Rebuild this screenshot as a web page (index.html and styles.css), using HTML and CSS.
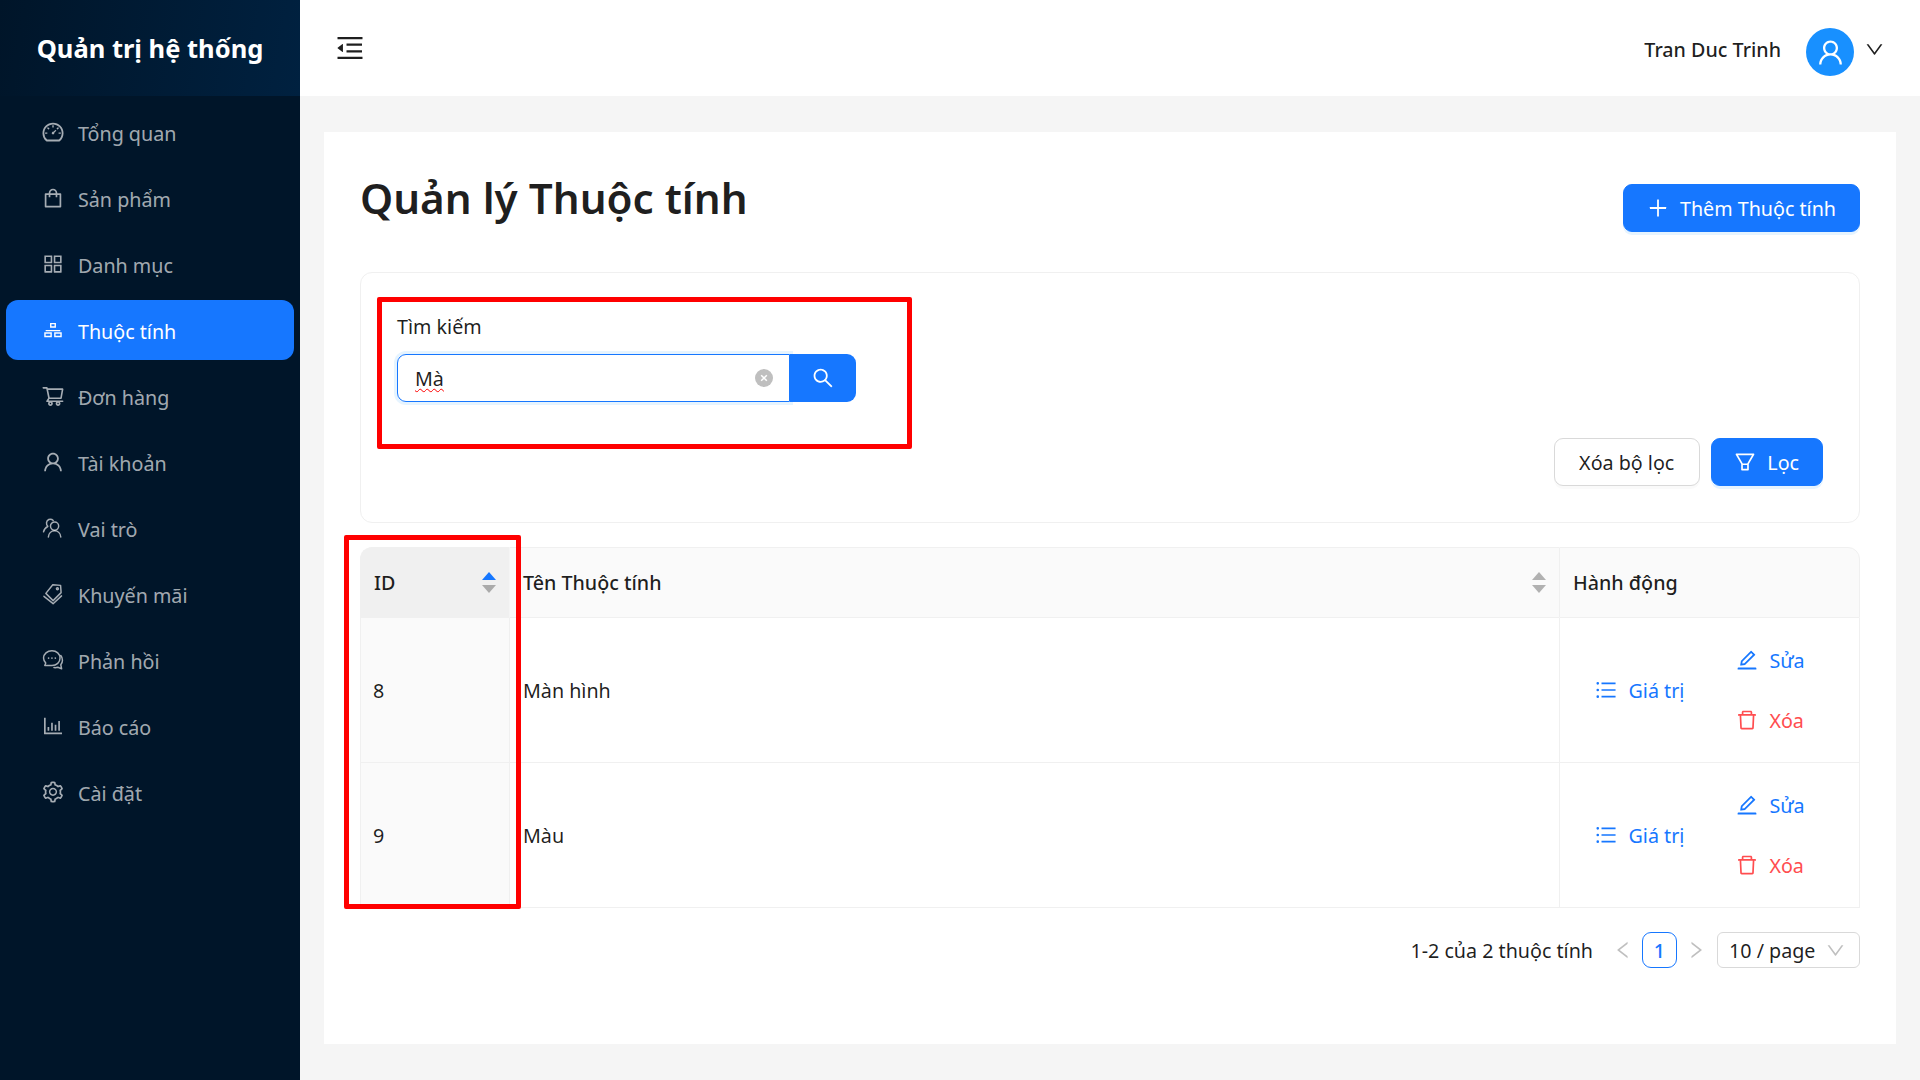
FILE: index.html
```html
<!DOCTYPE html>
<html lang="vi">

<head>
  <meta charset="UTF-8" />
  <title>Quản lý Thuộc tính</title>
  <link rel="stylesheet" href="styles.css">
</head>

<body>
  <svg class="sprite" xmlns="http://www.w3.org/2000/svg">
    <symbol id="i-dashboard" viewBox="0 0 1024 1024"><path d="M924.8 385.6a446.7 446.7 0 00-96-142.4 446.7 446.7 0 00-142.4-96C631.1 123.8 572.5 112 512 112s-119.1 11.8-174.4 35.2a446.7 446.7 0 00-142.4 96 446.7 446.7 0 00-96 142.4C75.8 440.9 64 499.5 64 560c0 132.7 58.3 257.7 159.9 343.1l1.7 1.4c5.8 4.8 13.1 7.5 20.6 7.5h531.7c7.5 0 14.8-2.7 20.6-7.5l1.7-1.4C901.7 817.7 960 692.7 960 560c0-60.5-11.9-119.1-35.2-174.4zM761.4 836H262.6A371.12 371.12 0 01140 560c0-99.4 38.7-192.8 109-263 70.3-70.3 163.7-109 263-109 99.4 0 192.8 38.7 263 109 70.3 70.3 109 163.7 109 263 0 105.6-44.5 205.5-122.6 276zM623.5 421.5a8.03 8.03 0 00-11.3 0L527.7 506c-18.7-5-39.4-.2-54.1 14.5a55.95 55.95 0 000 79.2 55.95 55.95 0 0079.2 0 55.87 55.87 0 0014.5-54.1l84.5-84.5c3.1-3.1 3.1-8.2 0-11.3l-28.3-28.3zM490 320h44c4.4 0 8-3.6 8-8v-80c0-4.4-3.6-8-8-8h-44c-4.4 0-8 3.6-8 8v80c0 4.4 3.6 8 8 8zm260 218v44c0 4.4 3.6 8 8 8h80c4.4 0 8-3.6 8-8v-44c0-4.4-3.6-8-8-8h-80c-4.4 0-8 3.6-8 8zm12.7-197.2l-31.1-31.1a8.03 8.03 0 00-11.3 0l-56.6 56.6a8.03 8.03 0 000 11.3l31.1 31.1c3.1 3.1 8.2 3.1 11.3 0l56.6-56.6c3.1-3.1 3.1-8.2 0-11.3zm-458.6-31.1a8.03 8.03 0 00-11.3 0l-31.1 31.1a8.03 8.03 0 000 11.3l56.6 56.6c3.1 3.1 8.2 3.1 11.3 0l31.1-31.1c3.1-3.1 3.1-8.2 0-11.3l-56.6-56.6zM262 530h-80c-4.4 0-8 3.6-8 8v44c0 4.4 3.6 8 8 8h80c4.4 0 8-3.6 8-8v-44c0-4.4-3.6-8-8-8z"/></symbol>
    <symbol id="i-shopping" viewBox="0 0 1024 1024"><path d="M832 312H696v-16c0-101.6-82.4-184-184-184s-184 82.4-184 184v16H192c-17.7 0-32 14.3-32 32v536c0 17.7 14.3 32 32 32h640c17.7 0 32-14.3 32-32V344c0-17.7-14.3-32-32-32zm-432-16c0-61.9 50.1-112 112-112s112 50.1 112 112v16H400v-16zm392 544H232V384h96v88c0 4.4 3.6 8 8 8h56c4.4 0 8-3.6 8-8v-88h224v88c0 4.4 3.6 8 8 8h56c4.4 0 8-3.6 8-8v-88h96v456z"/></symbol>
    <symbol id="i-appstore" viewBox="0 0 1024 1024"><path d="M464 144H160c-8.8 0-16 7.2-16 16v304c0 8.8 7.2 16 16 16h304c8.8 0 16-7.2 16-16V160c0-8.8-7.2-16-16-16zm-52 268H212V212h200v200zm452-268H560c-8.8 0-16 7.2-16 16v304c0 8.8 7.2 16 16 16h304c8.8 0 16-7.2 16-16V160c0-8.8-7.2-16-16-16zm-52 268H612V212h200v200zM464 544H160c-8.8 0-16 7.2-16 16v304c0 8.8 7.2 16 16 16h304c8.8 0 16-7.2 16-16V560c0-8.8-7.2-16-16-16zm-52 268H212V612h200v200zm452-268H560c-8.8 0-16 7.2-16 16v304c0 8.8 7.2 16 16 16h304c8.8 0 16-7.2 16-16V560c0-8.8-7.2-16-16-16zm-52 268H612V612h200v200z"/></symbol>
    <symbol id="i-cluster" viewBox="-64 -64 1152 1152"><path fill-rule="evenodd" d="M370 170h284v230H370zM438 238v94h148v-94zM92 624h364v230H92zM160 692v94h228v-94zM568 624h364v230H568zM636 692v94h228v-94zM160 512h704v64H160z"/></symbol>
    <symbol id="i-cart" viewBox="0 0 1024 1024"><path d="M922.9 701.9H327.4l29.9-60.9 496.8-.9c16.8 0 31.2-12 34.2-28.6l68.8-385.1c1.8-10.1-.9-20.5-7.5-28.4a34.99 34.99 0 00-26.6-12.5l-632-2.1-5.4-25.4c-3.4-16.2-18-28-34.6-28H96.5a35.3 35.3 0 100 70.6h125.9L246 312.8l58.1 281.3-74.8 122.1a34.96 34.96 0 00-3 36.8c6 11.9 18.1 19.4 31.5 19.4h62.8a102.43 102.43 0 00-20.6 61.7c0 56.6 46 102.6 102.6 102.6s102.6-46 102.6-102.6c0-22.3-7.4-44-20.6-61.7h161.1a102.43 102.43 0 00-20.6 61.7c0 56.6 46 102.6 102.6 102.6s102.6-46 102.6-102.6c0-22.3-7.4-44-20.6-61.7H923c19.4 0 35.3-15.8 35.3-35.3a35.42 35.42 0 00-35.4-35.2zM305.7 253l575.8 1.9-56.4 315.8-452.3.8L305.7 253zm96.9 612.7c-17.4 0-31.6-14.2-31.6-31.6 0-17.4 14.2-31.6 31.6-31.6s31.6 14.2 31.6 31.6a31.6 31.6 0 01-31.6 31.6zm325.1 0c-17.4 0-31.6-14.2-31.6-31.6 0-17.4 14.2-31.6 31.6-31.6s31.6 14.2 31.6 31.6a31.6 31.6 0 01-31.6 31.6z"/></symbol>
    <symbol id="i-user" viewBox="0 0 1024 1024"><path d="M858.5 763.6a374 374 0 00-80.6-119.5 375.63 375.63 0 00-119.5-80.6c-.4-.2-.8-.3-1.2-.5C719.5 518 760 444.7 760 362c0-137-111-248-248-248S264 225 264 362c0 82.7 40.5 156 102.8 201.1-.4.2-.8.3-1.2.5-44.8 18.9-85 46-119.5 80.6a375.63 375.63 0 00-80.6 119.5A371.7 371.7 0 00136 901.8a8 8 0 008 8.2h60c4.4 0 7.9-3.5 8-7.8 2-77.2 33-149.5 87.8-204.3 56.7-56.7 132-87.9 212.2-87.9s155.5 31.2 212.2 87.9C779 752.7 810 825 812 902.2c.1 4.4 3.6 7.8 8 7.8h60a8 8 0 008-8.2c-1-47.8-10.9-94.3-29.5-138.2zM512 534c-45.9 0-89.1-17.9-121.6-50.4S340 407.9 340 362c0-45.9 17.9-89.1 50.4-121.6S466.1 190 512 190s89.1 17.9 121.6 50.4S684 316.1 684 362c0 45.9-17.9 89.1-50.4 121.6S557.9 534 512 534z"/></symbol>
    <symbol id="i-role" viewBox="-1.4 -1.4 22.8 22.8"><g fill="none" stroke="currentColor" stroke-width="1.4" stroke-linecap="round"><circle cx="11.5" cy="8.2" r="3.9"/><path d="M5.6 18.6c.3-3.6 2.8-5.9 5.9-5.9s5.6 2.3 5.9 5.9"/><path d="M10.2 2.8A4 4 0 0 0 6 1.9a3.9 3.9 0 0 0-.9 6.4M5 8.6C3 9.6 1.5 11.3 1 13.6"/></g></symbol>
    <symbol id="i-tags" viewBox="-1.4 -1.4 22.8 22.8"><g fill="none" stroke="currentColor" stroke-width="1.4" stroke-linejoin="round" stroke-linecap="round"><path d="M9.8 1.2l7.4.6.5 6.9-7.6 7.6-6.9-6.9z"/><path d="M1.4 12.2l8.7 7 8-7.4"/><circle cx="14.2" cy="5" r=".9"/></g></symbol>
    <symbol id="i-comment" viewBox="-1.4 -1.4 22.8 22.8"><g fill="none" stroke="currentColor" stroke-width="1.4" stroke-linejoin="round" stroke-linecap="round"><path d="M9 1.2c4.4 0 7.7 3 7.7 7s-3.300 7-7.700 7H2.200l.9-2.400C1.800 11.500 1 9.900 1 8.200c0-4 3.600-7 8-7z"/><path d="M17.400 5.800c1 1.200 1.600 2.800 1.600 4.400 0 1.600-.600 3.100-1.600 4.300l.800 3.900-3.600-1.500c-1.200.4-2.500.5-3.700.300"/></g><g fill="currentColor"><circle cx="5.800" cy="8.200" r=".8"/><circle cx="9" cy="8.200" r=".8"/><circle cx="12.200" cy="8.200" r=".8"/></g></symbol>
    <symbol id="i-chart" viewBox="0 0 1024 1024"><path d="M888 792H200V168c0-4.400-3.600-8-8-8h-56c-4.400 0-8 3.600-8 8v688c0 4.400 3.600 8 8 8h752c4.400 0 8-3.600 8-8v-56c0-4.400-3.600-8-8-8zm-600-80h56c4.400 0 8-3.600 8-8V560c0-4.400-3.600-8-8-8h-56c-4.400 0-8 3.600-8 8v144c0 4.400 3.600 8 8 8zm152 0h56c4.400 0 8-3.600 8-8V384c0-4.400-3.600-8-8-8h-56c-4.400 0-8 3.600-8 8v320c0 4.400 3.600 8 8 8zm152 0h56c4.400 0 8-3.600 8-8V462c0-4.400-3.600-8-8-8h-56c-4.400 0-8 3.600-8 8v242c0 4.400 3.600 8 8 8zm152 0h56c4.400 0 8-3.600 8-8V304c0-4.400-3.600-8-8-8h-56c-4.400 0-8 3.600-8 8v400c0 4.400 3.600 8 8 8z"/></symbol>
    <symbol id="i-setting" viewBox="0 0 1024 1024"><path d="M924.8 625.7l-65.5-56c3.100-19 4.700-38.400 4.700-57.800s-1.600-38.800-4.700-57.800l65.500-56a32.030 32.030 0 009.300-35.200l-.9-2.600a443.740 443.740 0 00-79.700-137.900l-1.800-2.100a32.120 32.120 0 00-35.100-9.500l-81.300 28.900c-30-24.600-63.500-44-99.700-57.600l-15.700-85a32.050 32.050 0 00-25.800-25.700l-2.700-.5c-52.100-9.400-106.900-9.400-159 0l-2.700.5a32.050 32.050 0 00-25.800 25.700l-15.800 85.400a351.860 351.860 0 00-99 57.400l-81.900-29.100a32 32 0 00-35.100 9.500l-1.800 2.100a446.020 446.020 0 00-79.700 137.900l-.9 2.600c-4.500 12.500-.8 26.500 9.300 35.200l66.300 56.600c-3.100 18.800-4.600 38-4.600 57.100 0 19.200 1.500 38.400 4.600 57.100L99 625.500a32.030 32.030 0 00-9.300 35.200l.9 2.600c18.100 50.400 44.900 96.900 79.700 137.900l1.800 2.100a32.120 32.120 0 0035.100 9.500l81.900-29.100c29.800 24.500 63.100 43.900 99 57.400l15.800 85.400a32.050 32.050 0 0025.800 25.700l2.700.5a449.400 449.400 0 00159 0l2.700-.5a32.050 32.050 0 0025.800-25.700l15.700-85a350 350 0 0099.700-57.600l81.300 28.900a32 32 0 0035.100-9.500l1.800-2.100c34.800-41.100 61.600-87.500 79.700-137.900l.9-2.600c4.500-12.300.8-26.300-9.300-35zM788.300 465.900c2.500 15.100 3.800 30.600 3.800 46.100s-1.300 31-3.800 46.100l-6.600 40.100 74.700 63.900a370.030 370.030 0 01-42.600 73.600L721 702.800l-31.400 25.800c-23.900 19.600-50.500 35-79.300 45.800l-38.100 14.300-17.900 97a377.500 377.500 0 01-85 0l-17.900-97.200-37.800-14.500c-28.500-10.800-55-26.200-78.700-45.700l-31.400-25.900-93.400 33.200c-17-22.900-31.200-47.600-42.600-73.600l75.500-64.500-6.500-40c-2.400-14.900-3.700-30.300-3.700-45.500 0-15.300 1.200-30.600 3.700-45.500l6.500-40-75.500-64.500c11.300-26.100 25.600-50.700 42.600-73.600l93.400 33.200 31.400-25.900c23.700-19.500 50.200-34.900 78.700-45.700l37.900-14.300 17.900-97.200c28.100-3.200 56.800-3.200 85 0l17.900 97 38.100 14.300c28.700 10.800 55.400 26.200 79.300 45.800l31.400 25.800 92.800-32.900c17 22.900 31.200 47.600 42.600 73.600L781.800 426l6.500 39.900zM512 326c-97.200 0-176 78.800-176 176s78.800 176 176 176 176-78.800 176-176-78.800-176-176-176zm79.200 255.200A111.600 111.600 0 01512 614c-29.900 0-58-11.700-79.200-32.800A111.600 111.600 0 01400 502c0-29.900 11.700-58 32.800-79.200C454 401.600 482.100 390 512 390c29.900 0 58 11.600 79.200 32.800A111.600 111.600 0 01624 502c0 29.900-11.700 58-32.800 79.200z"/></symbol>
    <symbol id="i-fold" viewBox="0 0 1024 1024"><path d="M408 442h480c4.400 0 8-3.600 8-8v-56c0-4.400-3.600-8-8-8H408c-4.400 0-8 3.600-8 8v56c0 4.400 3.600 8 8 8zm-8 204c0 4.400 3.600 8 8 8h480c4.400 0 8-3.600 8-8v-56c0-4.400-3.600-8-8-8H408c-4.400 0-8 3.600-8 8v56zm504-486H120c-4.400 0-8 3.600-8 8v56c0 4.400 3.600 8 8 8h784c4.400 0 8-3.600 8-8v-56c0-4.400-3.600-8-8-8zm0 632H120c-4.400 0-8 3.600-8 8v56c0 4.400 3.600 8 8 8h784c4.400 0 8-3.600 8-8v-56c0-4.400-3.600-8-8-8zM115.400 518.900L271.700 642c5.800 4.600 14.400.5 14.400-6.900V388.900c0-7.400-8.500-11.500-14.400-6.900L115.400 505.100a8.740 8.740 0 000 13.800z"/></symbol>
    <symbol id="i-down" viewBox="0 0 1024 1024"><path d="M884 256h-75c-5.100 0-9.900 2.500-12.900 6.600L512 654.200 227.900 262.600c-3-4.100-7.800-6.600-12.900-6.600h-75c-6.500 0-10.300 7.400-6.500 12.700l352.600 486.100c12.800 17.600 39 17.600 51.700 0l352.600-486.100c3.900-5.300.1-12.700-6.400-12.700z"/></symbol>
    <symbol id="i-left" viewBox="0 0 1024 1024"><path d="M724 218.300V141c0-6.700-7.700-10.400-12.900-6.300L260.300 486.800a31.860 31.860 0 000 50.300l450.800 352.100c5.300 4.100 12.900.4 12.900-6.300v-77.300c0-4.900-2.300-9.600-6.100-12.600l-360-281 360-281.100c3.800-3 6.100-7.700 6.100-12.600z"/></symbol>
    <symbol id="i-right" viewBox="0 0 1024 1024"><path d="M765.700 486.800L314.900 134.700A7.970 7.970 0 00302 141v77.300c0 4.900 2.300 9.600 6.100 12.600l360 281.100-360 281.100c-3.900 3-6.100 7.700-6.100 12.600V883c0 6.700 7.700 10.400 12.900 6.300l450.800-352.100a31.960 31.960 0 000-50.400z"/></symbol>
    <symbol id="i-plus" viewBox="0 0 1024 1024"><path d="M482 152h60q8 0 8 8v704q0 8-8 8h-60q-8 0-8-8V160q0-8 8-8z"/><path d="M176 474h672q8 0 8 8v60q0 8-8 8H176q-8 0-8-8v-60q0-8 8-8z"/></symbol>
    <symbol id="i-search" viewBox="0 0 1024 1024"><path d="M909.600 854.500L649.900 594.800C690.200 542.700 712 479 712 412c0-80.200-31.300-155.400-87.900-212.100-56.600-56.700-132-87.900-212.100-87.900s-155.500 31.300-212.100 87.900C143.200 256.500 112 331.800 112 412c0 80.100 31.300 155.500 87.900 212.100C256.500 680.800 331.800 712 412 712c67 0 130.600-21.800 182.700-62l259.700 259.600a8.200 8.200 0 0011.600 0l43.600-43.500a8.200 8.200 0 000-11.600zM570.400 570.400C528 612.700 471.800 636 412 636s-116-23.300-158.400-65.600C211.300 528 188 471.800 188 412s23.300-116.100 65.600-158.400C296 211.300 352.200 188 412 188s116.100 23.200 158.400 65.600S636 352.200 636 412s-23.300 116.100-65.600 158.400z"/></symbol>
    <symbol id="i-filter" viewBox="0 0 1024 1024"><path d="M880.100 154H143.900c-24.500 0-39.800 26.700-27.500 48L349 597.400V838c0 17.700 14.200 32 31.800 32h262.400c17.600 0 31.800-14.300 31.800-32V597.400L907.700 202c12.200-21.300-3.100-48-27.600-48zM603.400 798H420.600V642h182.900v156zm9.600-236.600l-9.500 16.600h-183l-9.500-16.600L212.700 226h598.600L613 561.400z"/></symbol>
    <symbol id="i-list" viewBox="0 0 1024 1024"><path d="M912 192H328c-4.400 0-8 3.600-8 8v56c0 4.400 3.600 8 8 8h584c4.400 0 8-3.600 8-8v-56c0-4.400-3.600-8-8-8zm0 284H328c-4.400 0-8 3.600-8 8v56c0 4.400 3.600 8 8 8h584c4.400 0 8-3.600 8-8v-56c0-4.400-3.600-8-8-8zm0 284H328c-4.400 0-8 3.600-8 8v56c0 4.400 3.600 8 8 8h584c4.400 0 8-3.600 8-8v-56c0-4.400-3.600-8-8-8zM104 228a56 56 0 10112 0 56 56 0 10-112 0zm0 284a56 56 0 10112 0 56 56 0 10-112 0zm0 284a56 56 0 10112 0 56 56 0 10-112 0z"/></symbol>
    <symbol id="i-edit" viewBox="0 0 1024 1024"><path d="M257.700 752c2 0 4-.2 6-.5L431.900 722c2-.4 3.900-1.300 5.300-2.800l423.900-423.900a9.960 9.960 0 000-14.100L694.900 114.900c-1.900-1.900-4.400-2.900-7.100-2.900s-5.200 1-7.100 2.900L256.800 538.800c-1.500 1.500-2.400 3.300-2.800 5.300l-29.500 168.200a33.500 33.500 0 009.400 29.800c6.600 6.400 14.900 9.900 23.800 9.900zm67.400-174.400L687.800 215l73.300 73.300-362.700 362.600-88.900 15.700 15.600-89zM880 836H144c-17.700 0-32 14.300-32 32v36c0 4.400 3.600 8 8 8h784c4.400 0 8-3.600 8-8v-36c0-17.700-14.300-32-32-32z"/></symbol>
    <symbol id="i-delete" viewBox="0 0 1024 1024"><path d="M360 184h-8c4.400 0 8-3.600 8-8v8h304v-8c0 4.400 3.600 8 8 8h-8v72h72v-80c0-35.300-28.700-64-64-64H352c-35.300 0-64 28.700-64 64v80h72v-72zm504 72H160c-17.700 0-32 14.300-32 32v32c0 4.400 3.600 8 8 8h60.400l24.700 523c1.600 34.100 29.800 61 63.900 61h454c34.200 0 62.300-26.800 63.900-61l24.700-523H888c4.400 0 8-3.600 8-8v-32c0-17.700-14.300-32-32-32zM731.300 840H292.700l-24.200-512h487l-24.200 512z"/></symbol>
  </svg>

  <aside class="sidebar">
    <div class="logo">Quản trị hệ thống</div>
    <nav class="menu">
      <a class="menu-item"><svg class="icon"><use href="#i-dashboard"/></svg><span>Tổng quan</span></a>
      <a class="menu-item"><svg class="icon"><use href="#i-shopping"/></svg><span>Sản phẩm</span></a>
      <a class="menu-item"><svg class="icon"><use href="#i-appstore"/></svg><span>Danh mục</span></a>
      <a class="menu-item active"><svg class="icon"><use href="#i-cluster"/></svg><span>Thuộc tính</span></a>
      <a class="menu-item"><svg class="icon"><use href="#i-cart"/></svg><span>Đơn hàng</span></a>
      <a class="menu-item"><svg class="icon"><use href="#i-user"/></svg><span>Tài khoản</span></a>
      <a class="menu-item"><svg class="icon"><use href="#i-role"/></svg><span>Vai trò</span></a>
      <a class="menu-item"><svg class="icon"><use href="#i-tags"/></svg><span>Khuyến mãi</span></a>
      <a class="menu-item"><svg class="icon"><use href="#i-comment"/></svg><span>Phản hồi</span></a>
      <a class="menu-item"><svg class="icon"><use href="#i-chart"/></svg><span>Báo cáo</span></a>
      <a class="menu-item"><svg class="icon"><use href="#i-setting"/></svg><span>Cài đặt</span></a>
    </nav>
  </aside>

  <div class="main">
    <header class="topbar">
      <svg class="fold-icon"><use href="#i-fold"/></svg>
      <div class="account">
        <span class="account-name">Tran Duc Trinh</span>
        <span class="avatar"><svg class="avatar-icon"><use href="#i-user"/></svg></span>
        <svg class="account-caret"><use href="#i-down"/></svg>
      </div>
    </header>

    <main class="card">
      <div class="page-head">
        <h1>Quản lý Thuộc tính</h1>
        <button class="btn primary add-btn"><svg class="icon"><use href="#i-plus"/></svg>Thêm Thuộc tính</button>
      </div>

      <section class="filter-box">
        <div class="field-label">Tìm kiếm</div>
        <div class="search-group">
          <div class="search-input">
            <span class="search-value">Mà</span>
            <span class="clear-icon">
              <svg viewBox="0 0 16 16"><circle cx="8" cy="8" r="8" fill="#bfbfbf"/><path d="M5.500 5.500l5 5m0-5l-5 5" stroke="#fff" stroke-width="1.400"/></svg>
            </span>
          </div>
          <button class="search-btn"><svg class="icon"><use href="#i-search"/></svg></button>
        </div>
        <div class="filter-actions">
          <button class="btn">Xóa bộ lọc</button>
          <button class="btn primary"><svg class="icon"><use href="#i-filter"/></svg>Lọc</button>
        </div>
      </section>

      <table class="data-table">
        <colgroup>
          <col class="col-id">
          <col>
          <col class="col-action">
        </colgroup>
        <thead>
          <tr>
            <th class="sorted">
              <div class="th-inner">ID
                <svg class="sorter" viewBox="0 0 14 22"><path class="up on" d="M7 0l7 8H0z"/><path class="down" d="M0 13h14l-7 8z"/></svg>
              </div>
            </th>
            <th>
              <div class="th-inner">Tên Thuộc tính
                <svg class="sorter" viewBox="0 0 14 22"><path class="up" d="M7 0l7 8H0z"/><path class="down" d="M0 13h14l-7 8z"/></svg>
              </div>
            </th>
            <th>Hành động</th>
          </tr>
        </thead>
        <tbody>
          <tr>
            <td class="sorted">8</td>
            <td>Màn hình</td>
            <td>
              <div class="row-actions">
                <a class="link"><svg class="icon"><use href="#i-list"/></svg>Giá trị</a>
                <div class="action-stack">
                  <a class="link"><svg class="icon"><use href="#i-edit"/></svg>Sửa</a>
                  <a class="link danger"><svg class="icon"><use href="#i-delete"/></svg>Xóa</a>
                </div>
              </div>
            </td>
          </tr>
          <tr>
            <td class="sorted">9</td>
            <td>Màu</td>
            <td>
              <div class="row-actions">
                <a class="link"><svg class="icon"><use href="#i-list"/></svg>Giá trị</a>
                <div class="action-stack">
                  <a class="link"><svg class="icon"><use href="#i-edit"/></svg>Sửa</a>
                  <a class="link danger"><svg class="icon"><use href="#i-delete"/></svg>Xóa</a>
                </div>
              </div>
            </td>
          </tr>
        </tbody>
      </table>

      <div class="pagination">
        <span class="page-total">1-2 của 2 thuộc tính</span>
        <svg class="page-arrow"><use href="#i-left"/></svg>
        <span class="page-num">1</span>
        <svg class="page-arrow"><use href="#i-right"/></svg>
        <div class="page-size">10 / page<svg class="page-size-caret"><use href="#i-down"/></svg></div>
      </div>

      <!-- red annotation frames drawn over the screenshot -->
      <div class="mark mark-search"></div>
      <div class="mark mark-id"></div>
    </main>
  </div>
</body>

</html>
```

FILE: styles.css
```css
* {
  box-sizing: border-box;
}

body {
  margin: 0;
  height: 1080px;
  display: flex;
  overflow: hidden;
  background: #f5f5f5;
  color: rgba(0, 0, 0, 0.88);
  font-family: "Noto Sans", "Liberation Sans", sans-serif;
  font-size: 19.7px;
}

.sprite {
  display: none;
}

.icon {
  width: 24px;
  height: 24px;
  flex-shrink: 0;
  fill: currentColor;
}

/* sidebar */
.sidebar {
  width: 300px;
  flex-shrink: 0;
  background: #001529;
}

.logo {
  height: 96px;
  display: flex;
  align-items: center;
  justify-content: center;
  background: linear-gradient(100deg, #001529, #002140);
  color: #fff;
  font-size: 25.5px;
  font-weight: 700;
}

.menu {
  padding: 6px;
  display: flex;
  flex-direction: column;
  gap: 6px;
}

.menu-item {
  height: 60px;
  padding-left: 34.5px;
  display: flex;
  align-items: center;
  gap: 13.5px;
  border-radius: 12px;
  color: rgba(255, 255, 255, 0.65);
}

.menu-item span {
  margin-top: 2px;
}

.menu-item.active {
  background: #1677ff;
  color: #fff;
}

/* top bar */
.main {
  flex: 1;
  min-width: 0;
}

.topbar {
  height: 96px;
  padding: 0 35.5px 0 33.5px;
  display: flex;
  align-items: center;
  justify-content: space-between;
  background: #fff;
}

.fold-icon {
  width: 32px;
  height: 32px;
  fill: rgba(0, 0, 0, 0.88);
}

.account {
  display: flex;
  align-items: center;
}

.account-name {
  margin-top: 2px;
  font-weight: 500;
}

.avatar {
  width: 48px;
  height: 48px;
  margin: 8px 9.5px 0 25px;
  display: flex;
  align-items: center;
  justify-content: center;
  border-radius: 50%;
  background: #1890ff;
}

.avatar-icon {
  width: 31px;
  height: 31px;
  fill: #fff;
}

.account-caret {
  width: 21px;
  height: 21px;
  margin-top: 2px;
  fill: rgba(0, 0, 0, 0.88);
}

/* content card */
.card {
  position: relative;
  height: 912px;
  margin: 36px 24px;
  padding: 0 36px;
  background: #fff;
}

.page-head {
  height: 140px;
  display: flex;
  align-items: flex-start;
  justify-content: space-between;
}

h1 {
  margin: 39px 0 0;
  font-size: 42.2px;
  line-height: 1.3;
  font-weight: 600;
}

.btn {
  height: 48px;
  padding: 0 24.5px;
  display: inline-flex;
  align-items: center;
  gap: 10px;
  border: 1.5px solid #d9d9d9;
  border-radius: 9px;
  background: #fff;
  box-shadow: 0 3px 0 rgba(0, 0, 0, 0.02);
  color: rgba(0, 0, 0, 0.88);
  font: inherit;
}

.btn.primary {
  padding: 0 23px 0 21.5px;
  border-color: #1677ff;
  background: #1677ff;
  box-shadow: 0 3px 0 rgba(5, 145, 255, 0.1);
  color: #fff;
}

.add-btn {
  margin-top: 52px;
}

/* filter */
.filter-box {
  height: 251px;
  padding: 39px 36px 0;
  border: 1.5px solid #f0f0f0;
  border-radius: 12px;
}

.field-label {
  height: 30px;
  line-height: 30px;
  margin-bottom: 12px;
}

.search-group {
  display: flex;
  width: 459px;
  height: 48px;
}

.search-input {
  flex: 1;
  padding: 0 16.5px 0 17px;
  display: flex;
  align-items: center;
  justify-content: space-between;
  border: 1.5px solid #1677ff;
  border-radius: 9px 0 0 9px;
  box-shadow: 0 0 0 3px rgba(5, 145, 255, 0.1);
}

.search-value {
  text-decoration: underline wavy #f00 1.2px;
  text-underline-offset: 2px;
}

.clear-icon {
  width: 18px;
  height: 18px;
  display: flex;
}

.search-btn {
  width: 66px;
  padding: 0;
  display: flex;
  align-items: center;
  justify-content: center;
  border: 0;
  border-radius: 0 9px 9px 0;
  background: #1677ff;
  color: #fff;
}

.filter-actions {
  margin: 36px 0 0;
  display: flex;
  justify-content: flex-end;
  gap: 11px;
}

/* table */
.data-table {
  width: 100%;
  margin-top: 24px;
  border-collapse: separate;
  border-spacing: 0;
  table-layout: fixed;
}

.col-id {
  width: 150px;
}

.col-action {
  width: 301px;
}

th,
td {
  padding: 0 13px;
  border-bottom: 1.5px solid #f0f0f0;
  text-align: left;
}

th {
  height: 71px;
  background: #fafafa;
  font-weight: 500;
  border-top: 1.5px solid #f0f0f0;
}

th:first-child {
  border-top-left-radius: 12px;
  border-left: 1.5px solid #f0f0f0;
}

th:last-child {
  border-top-right-radius: 12px;
  border-right: 1.5px solid #f0f0f0;
  border-left: 1.5px solid #f0f0f0;
}

td {
  height: 145px;
}

td:first-child {
  padding-left: 12px;
  border-left: 1.5px solid #f0f0f0;
}

td:last-child {
  border-right: 1.5px solid #f0f0f0;
  border-left: 1.5px solid #f0f0f0;
}

th.sorted {
  background: #f0f0f0;
  border-right: 1.5px solid #f5f5f5;
}

td.sorted {
  background: #fafafa;
  border-right: 1.5px solid #f0f0f0;
}

.th-inner {
  display: flex;
  align-items: center;
  justify-content: space-between;
}

.sorter {
  width: 14px;
  height: 22px;
  fill: rgba(0, 0, 0, 0.29);
}

.sorter .on {
  fill: #1677ff;
}

.row-actions {
  padding-left: 21px;
  display: flex;
  align-items: center;
  gap: 50.5px;
}

.action-stack {
  display: flex;
  flex-direction: column;
  gap: 36px;
}

.link {
  height: 24px;
  display: flex;
  align-items: center;
  gap: 10.5px;
  color: #1677ff;
}

.link.danger {
  color: #ff4d4f;
}

/* pagination */
.pagination {
  margin-top: 24px;
  display: flex;
  align-items: center;
  justify-content: flex-end;
}

.page-total {
  margin-right: 19px;
}

.page-arrow {
  width: 22px;
  height: 22px;
  fill: rgba(0, 0, 0, 0.25);
}

.page-num {
  width: 35px;
  height: 36px;
  margin: 0 8px;
  display: flex;
  align-items: center;
  justify-content: center;
  border: 1.5px solid #1677ff;
  border-radius: 9px;
  color: #1677ff;
  font-weight: 500;
}

.page-size {
  width: 143px;
  height: 36px;
  margin-left: 10px;
  padding: 0 13px 0 11px;
  display: flex;
  align-items: center;
  justify-content: space-between;
  border: 1.5px solid #d9d9d9;
  border-radius: 6px;
}

.page-size-caret {
  width: 21px;
  height: 21px;
  fill: rgba(0, 0, 0, 0.25);
}

/* annotation frames */
.mark {
  position: absolute;
  border: 5px solid #f00;
  border-radius: 2px;
}

.mark-search {
  left: 53px;
  top: 165px;
  width: 535px;
  height: 152px;
}

.mark-id {
  left: 20px;
  top: 403px;
  width: 177px;
  height: 374px;
}
```
